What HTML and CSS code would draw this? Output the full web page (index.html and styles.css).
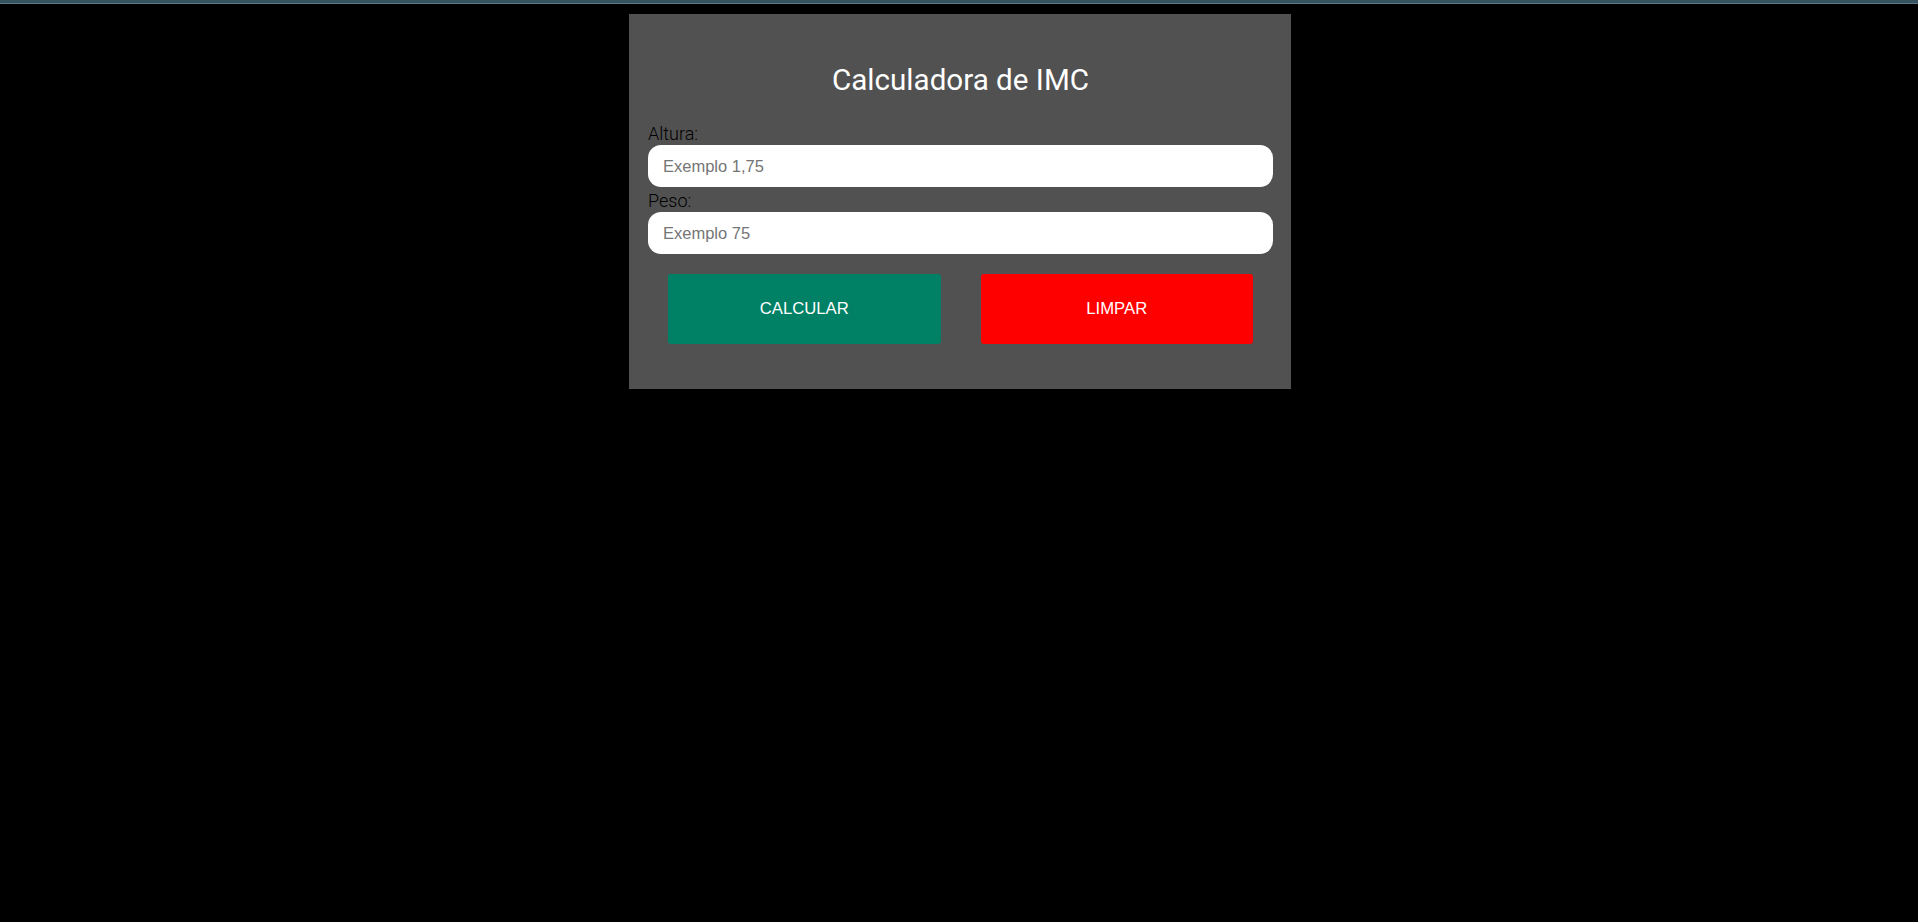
FILE: index.html
```html
<!DOCTYPE html>
<html lang="pt-BR">
<head>
<meta charset="utf-8">
<title>Calculadora de IMC</title>
<link rel="stylesheet" href="styles.css">
</head>
<body>
<div class="topbar"></div>
<main class="card">
  <h1 class="title">Calculadora de IMC</h1>
  <form class="form">
    <label class="label" for="altura">Altura:</label>
    <input class="field" id="altura" type="text" placeholder="Exemplo 1,75">
    <label class="label" for="peso">Peso:</label>
    <input class="field" id="peso" type="text" placeholder="Exemplo 75">
    <div class="actions">
      <button type="button" class="btn btn-calc">CALCULAR</button>
      <button type="reset" class="btn btn-clear">LIMPAR</button>
    </div>
  </form>
</main>
</body>
</html>
```
FILE: styles.css
```css
html, body {
  margin: 0;
  padding: 0;
  background: #000;
  height: 100%;
}
body {
  font-family: Roboto, "Liberation Sans", Arial, sans-serif;
}
.topbar {
  height: 3px;
  background: #36535f;
  border-bottom: 1px solid #5a7883;
}
.card {
  box-sizing: border-box;
  width: 662px;
  margin: 10px 0 0 calc(50% - 330px);
  padding: 49px 18px 45px 19px;
  background: #515151;
}
.title {
  margin: 0 0 25px;
  font-family: Roboto, sans-serif;
  font-weight: 400;
  font-size: 29.6px;
  line-height: 35px;
  color: #fff;
  text-align: center;
}
.form {
  display: flex;
  flex-direction: column;
}
.label {
  display: block;
  font-family: "Roboto Light", Roboto, sans-serif;
  font-weight: 300;
  font-size: 18px;
  line-height: 21px;
  color: #000;
  margin-bottom: 1px;
}
.field {
  box-sizing: border-box;
  display: block;
  width: 100%;
  height: 42px;
  margin: 0 0 3px;
  padding: 0 15px;
  border: none;
  border-radius: 13px;
  background: #fff;
  font-family: "Liberation Sans", Arial, sans-serif;
  font-size: 16.5px;
  color: #222;
  outline: none;
}
.field::placeholder {
  color: #757575;
}
.actions {
  display: flex;
  margin-top: 17px;
}
.btn {
  flex: 1;
  height: 70px;
  margin: 0 20px;
  border: none;
  border-radius: 3px;
  color: #fff;
  font-family: "Liberation Sans", Arial, sans-serif;
  font-size: 16.7px;
  cursor: pointer;
}
.btn-calc {
  background: #008064;
}
.btn-clear {
  background: #ff0000;
}
```
